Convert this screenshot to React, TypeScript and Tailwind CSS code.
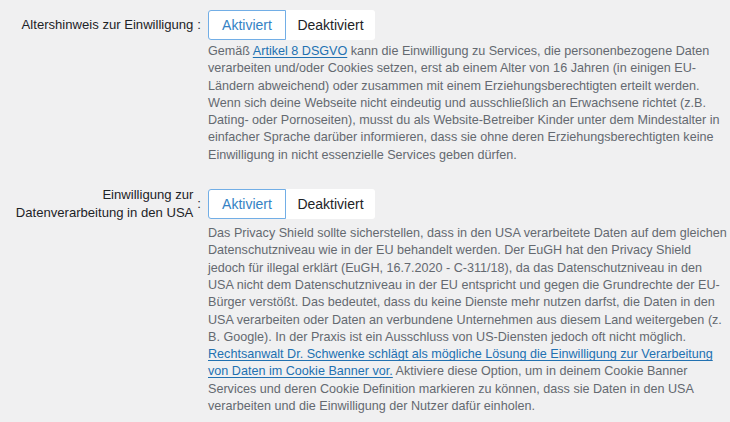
import React from "react";

const font = { fontFamily: '"Liberation Sans", Arial, sans-serif' };

function Toggle() {
  return (
    <div className="flex h-[30px]">
      <button className="w-[78px] h-[30px] border border-[#72aee6] bg-white text-[#3582c4] text-[14px] rounded-l-[3px] flex items-center justify-center">
        Aktiviert
      </button>
      <button className="w-[89px] h-[30px] bg-white text-[#1d2327] text-[14px] rounded-r-[3px] flex items-center justify-center">
        Deaktiviert
      </button>
    </div>
  );
}

function Link({ children }: { children: React.ReactNode }) {
  return <a className="text-[#2271b1] underline underline-offset-[2px]">{children}</a>;
}

function Row({ label, children }: { label: React.ReactNode; children: React.ReactNode }) {
  return (
    <div className="grid grid-cols-[208px_1fr]">
      <div className="flex items-center justify-end pr-[7px] text-[13.1px] text-[#1d2327] leading-[18px]">
        <div className="text-right whitespace-nowrap">{label}</div>
        <span className="ml-[4px]">:</span>
      </div>
      <div className="flex items-center">
        <Toggle />
      </div>
      <div />
      <div className="mt-[3px] text-[12.6px] leading-[17.3px] text-[#646970] whitespace-nowrap">
        {children}
      </div>
    </div>
  );
}

export default function App() {
  return (
    <div className="w-[730px] h-[422px] bg-[#f0f0f1] overflow-hidden pt-[10px]" style={font}>
      <Row label={<>Altershinweis zur Einwilligung</>}>
        Gemäß <Link>Artikel 8 DSGVO</Link> kann die Einwilligung zu Services, die personenbezogene Daten<br />
        verarbeiten und/oder Cookies setzen, erst ab einem Alter von 16 Jahren (in einigen EU-<br />
        Ländern abweichend) oder zusammen mit einem Erziehungsberechtigten erteilt werden.<br />
        Wenn sich deine Webseite nicht eindeutig und ausschließlich an Erwachsene richtet (z.B.<br />
        Dating- oder Pornoseiten), musst du als Website-Betreiber Kinder unter dem Mindestalter in<br />
        einfacher Sprache darüber informieren, dass sie ohne deren Erziehungsberechtigten keine<br />
        Einwilligung in nicht essenzielle Services geben dürfen.
      </Row>
      <div className="h-[22px]" />
      <Row label={<>Einwilligung zur<br />Datenverarbeitung in den USA</>}>
        Das Privacy Shield sollte sicherstellen, dass in den USA verarbeitete Daten auf dem gleichen<br />
        Datenschutzniveau wie in der EU behandelt werden. Der EuGH hat den Privacy Shield<br />
        jedoch für illegal erklärt (EuGH, 16.7.2020 - C-311/18), da das Datenschutzniveau in den<br />
        USA nicht dem Datenschutzniveau in der EU entspricht und gegen die Grundrechte der EU-<br />
        Bürger verstößt. Das bedeutet, dass du keine Dienste mehr nutzen darfst, die Daten in den<br />
        USA verarbeiten oder Daten an verbundene Unternehmen aus diesem Land weitergeben (z.<br />
        B. Google). In der Praxis ist ein Ausschluss von US-Diensten jedoch oft nicht möglich.<br />
        <Link>Rechtsanwalt Dr. Schwenke schlägt als mögliche Lösung die Einwilligung zur Verarbeitung</Link><br />
        <Link>von Daten im Cookie Banner vor.</Link> Aktiviere diese Option, um in deinem Cookie Banner<br />
        Services und deren Cookie Definition markieren zu können, dass sie Daten in den USA<br />
        verarbeiten und die Einwilligung der Nutzer dafür einholen.
      </Row>
    </div>
  );
}
